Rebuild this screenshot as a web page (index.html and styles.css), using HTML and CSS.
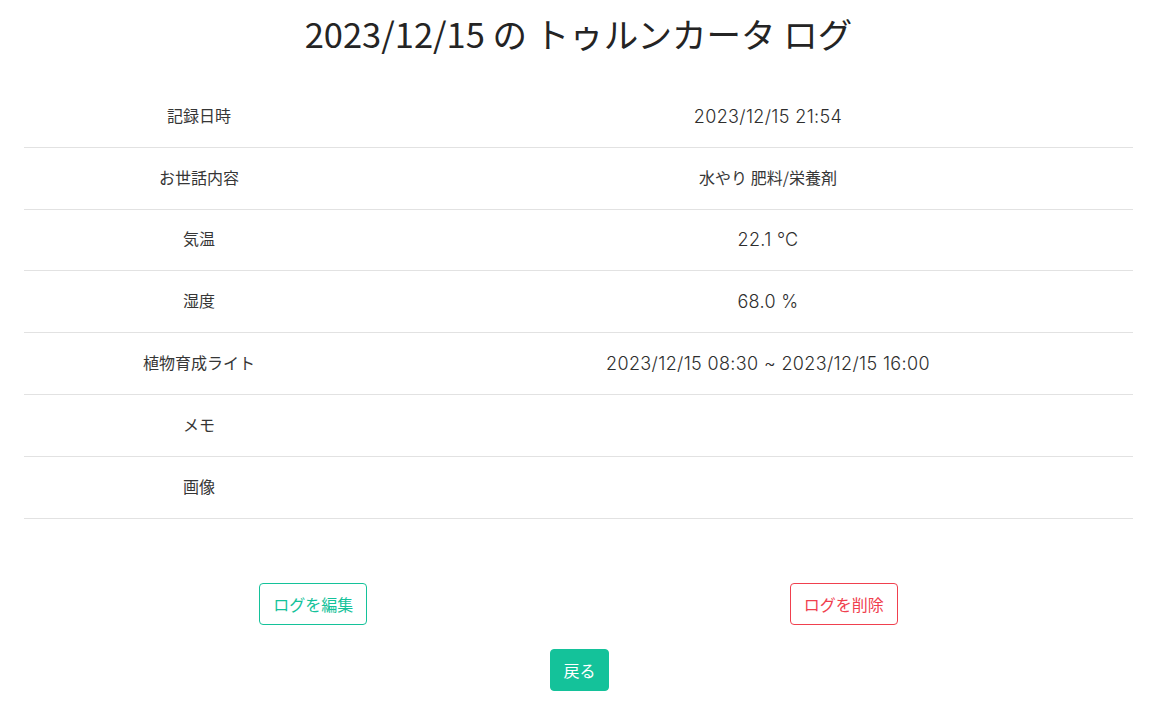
FILE: index.html
```html
<!DOCTYPE html>
<html lang="ja">
<head>
<meta charset="utf-8">
<title>ログ</title>
<link rel="stylesheet" href="styles.css">
</head>
<body>
<main class="page">
  <h1 class="title">2023/12/15 の トゥルンカータ ログ</h1>
  <div class="log-table">
    <div class="row"><div class="label">記録日時</div><div class="value"><span class="latin">2023/12/15 21:54</span></div></div>
    <div class="row"><div class="label">お世話内容</div><div class="value">水やり 肥料/栄養剤</div></div>
    <div class="row"><div class="label">気温</div><div class="value"><span class="latin">22.1 ℃</span></div></div>
    <div class="row"><div class="label">湿度</div><div class="value"><span class="latin">68.0 %</span></div></div>
    <div class="row"><div class="label">植物育成ライト</div><div class="value"><span class="latin">2023/12/15 08:30 ~ 2023/12/15 16:00</span></div></div>
    <div class="row"><div class="label">メモ</div><div class="value"></div></div>
    <div class="row"><div class="label">画像</div><div class="value"></div></div>
  </div>
  <div class="actions">
    <div class="action-col left"><a class="btn btn-outline-green" href="#">ログを編集</a></div>
    <div class="action-col right"><a class="btn btn-outline-red" href="#">ログを削除</a></div>
  </div>
  <div class="back">
    <a class="btn btn-green" href="#">戻る</a>
  </div>
</main>
</body>
</html>
```
FILE: styles.css
```css
* { box-sizing: border-box; }
html, body { margin: 0; padding: 0; background: #fff; }
body {
  font-family: "Noto Sans CJK JP", "Noto Sans", sans-serif;
  color: #363636;
  font-size: 16px;
}
.page {
  padding: 0 22px 0 24px;
}
.title {
  margin: 0;
  padding-top: 12px;
  height: 86px;
  text-align: center;
  font-weight: 400;
  font-size: 34.5px;
  line-height: 42px;
  color: #242424;
}
.log-table {
  display: flex;
  flex-direction: column;
}
.row {
  display: grid;
  grid-template-columns: 350px 1fr;
  height: 61.8px;
  border-bottom: 1px solid #e2e2e2;
}
.label, .value {
  display: flex;
  align-items: center;
  justify-content: center;
  line-height: 24px;
  padding-bottom: 3px;
}
.value {
  padding-left: 29px;
}
.latin {
  font-family: Inter, "Noto Sans CJK JP", sans-serif;
  font-size: 18px;
  font-weight: 300;
  letter-spacing: 0.35px;
  line-height: 1;
  padding-top: 4px;
  color: #2e2e2e;
}
.actions {
  display: flex;
  margin-top: 64px;
}
.action-col {
  flex: 1;
  display: flex;
  justify-content: center;
}
.action-col.left { padding-left: 24px; }
.action-col.right { padding-right: 24px; }
.btn {
  display: inline-block;
  height: 42px;
  line-height: 24px;
  padding: 8px 13px;
  border: 1px solid transparent;
  border-radius: 4px;
  font-size: 16px;
  text-decoration: none;
}
.btn-outline-green { border-color: #14c29a; color: #14c29a; background: #fff; }
.btn-outline-red { border-color: #f0404e; color: #f0404e; background: #fff; }
.btn-green { background: #14c29a; border-color: #14c29a; color: #fff; padding: 8px 12px; }
.back {
  display: flex;
  justify-content: center;
  margin-top: 24px;
  padding-left: 2px;
}
```
